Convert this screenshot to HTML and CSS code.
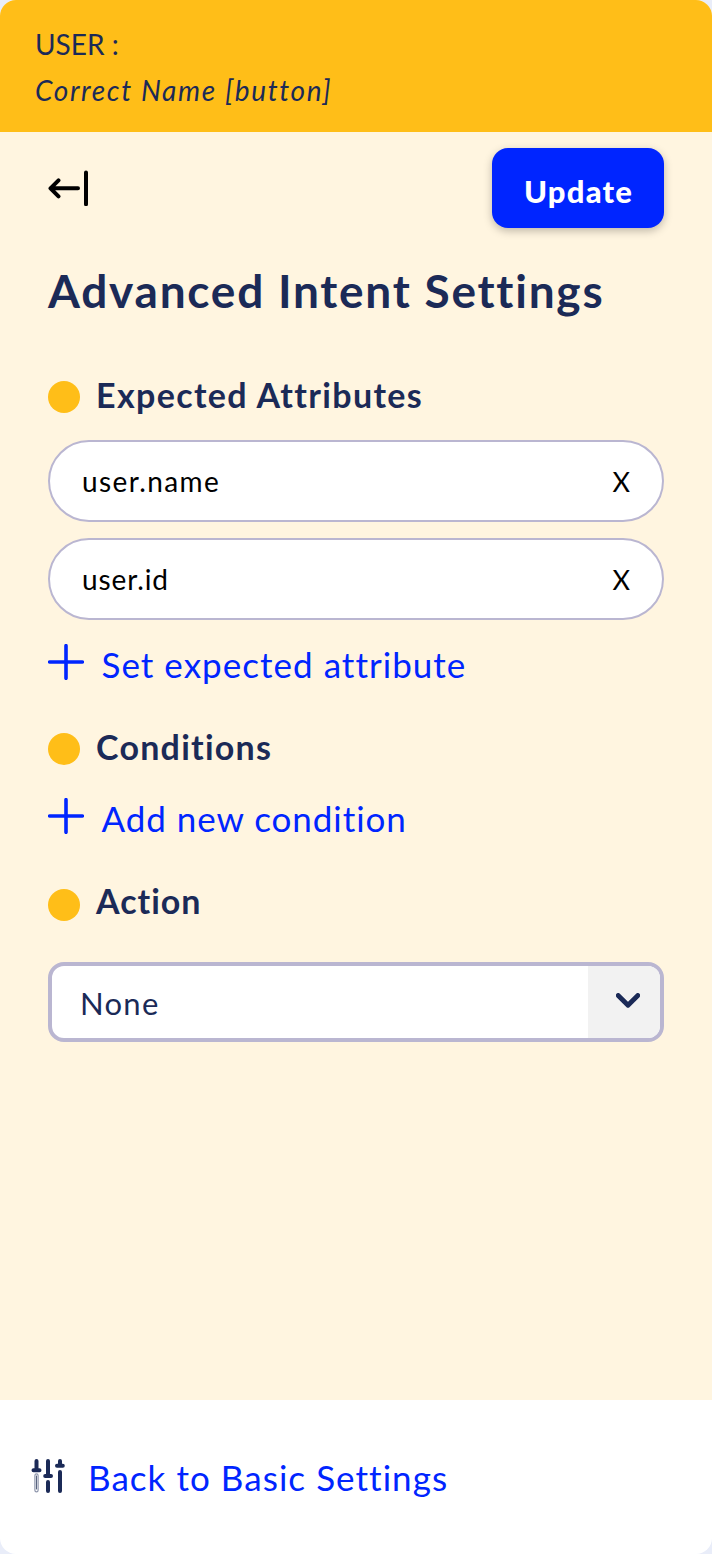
FILE: index.html
```html
<!DOCTYPE html>
<html lang="en">
<head>
<meta charset="utf-8">
<title>Advanced Intent Settings</title>
<link rel="stylesheet" href="styles.css">
</head>
<body>
<div class="panel">
  <header class="panel-header">
    <div><span class="t-user">USER :</span></div>
    <div><em class="t-name">Correct Name [button]</em></div>
  </header>
  <main class="content">
    <div class="toolbar">
      <svg class="back-icon" viewBox="0 0 42 36" fill="none" stroke="#000" stroke-width="4" stroke-linecap="round" stroke-linejoin="round"><path d="M30 18.300H2.500M10.500 10.300L2.500 18.300L10.500 26.300M38 2.500V34.300"/></svg>
      <button class="update"><span class="t-update">Update</span></button>
    </div>
    <h1><span class="t-title">Advanced Intent Settings</span></h1>
    <h2 class="section"><i class="dot"></i><span class="t-expected">Expected Attributes</span></h2>
    <div class="fields">
      <div class="field"><span class="t-username">user.name</span><span class="remove">X</span></div>
      <div class="field"><span class="t-userid">user.id</span><span class="remove">X</span></div>
    </div>
    <a class="add"><svg class="plus" viewBox="0 0 36 36"><path d="M18 1.7V34.3M1.7 18H34.3"/></svg><span class="t-set">Set expected attribute</span></a>
    <h2 class="section conditions"><i class="dot"></i><span class="t-conditions">Conditions</span></h2>
    <a class="add add-condition"><svg class="plus" viewBox="0 0 36 36"><path d="M18 1.7V34.3M1.7 18H34.3"/></svg><span class="t-add">Add new condition</span></a>
    <h2 class="section action"><i class="dot"></i><span class="t-action">Action</span></h2>
    <div class="select">
      <span class="t-none">None</span>
      <div class="arrow"><svg viewBox="0 0 24 15"><path d="M2.2 2.5L12 12.3L21.8 2.5"/></svg></div>
    </div>
  </main>
  <footer class="panel-footer">
    <svg class="sliders" viewBox="0 0 34 34" fill="none" stroke="#1b2a57" stroke-width="4" stroke-linecap="round"><path d="M5.500 2V10M2.500 11.200H8.500M17 2V15M14.200 17H20M17 23V32M29 2V5M26 6.800H31.800M29 13V32"/><rect x="3.900" y="14.800" width="3.200" height="18" rx="1.600" stroke="#8d95ab" stroke-width="1.200"/><path d="M5.500 17V30" stroke="#59647f" stroke-width="1"/></svg>
    <a class="t-back">Back to Basic Settings</a>
  </footer>
</div>
</body>
</html>
```
FILE: styles.css
```css
* { box-sizing: border-box; }
body { margin: 0; background: #e9edf9; font-family: Lato, sans-serif; font-variant-ligatures: none; color: #1b2a57; }
span, em, a { white-space: nowrap; }
svg { display: block; flex: none; }
.panel { height: 1554px; border-radius: 16px; overflow: hidden; background: #fff; display: flex; flex-direction: column; }
.panel-header { height: 132px; padding: 21px 35px 19px; background: #ffbe18; font-size: 28px; line-height: 46px; }
.content { flex: 1; padding: 16px 48px; background: #fff5e0; }
.toolbar { height: 80px; display: flex; justify-content: space-between; align-items: center; }
.back-icon { width: 42px; height: 36px; }
.update { width: 172px; height: 80px; padding: 5px 0 0; border: 0; border-radius: 16px; background: #0025ff; color: #fff; font: 900 31px Lato, sans-serif; box-shadow: 0 3px 8px rgba(0,0,0,.25); }
h1 { margin: 35px 0 0; font-size: 46px; line-height: 56px; font-weight: 700; }
.section { display: flex; align-items: center; gap: 16px; height: 40px; margin: 56px 0 0; font-size: 34px; line-height: 40px; font-weight: 700; }
.conditions { margin-top: 41px; }
.action { margin-top: 41px; }
.dot { width: 32px; height: 32px; flex: none; border-radius: 50%; background: #ffbe18; margin-top: 4px; }
.action .dot { margin-top: 8px; }
.fields { display: grid; gap: 16px; margin-top: 25px; }
.field { height: 82px; display: flex; align-items: center; justify-content: space-between; padding: 0 32px; border: 2px solid #bab6d1; border-radius: 41px; background: #fff; color: #000; font-size: 28px; }
.add { display: flex; align-items: center; gap: 17.5px; height: 44px; margin-top: 22px; color: #0025ff; font-size: 35px; line-height: 44px; }
.add-condition { margin-top: 29px; }
.plus { width: 36px; height: 36px; margin-bottom: 4px; stroke: currentColor; stroke-width: 3.6; stroke-linecap: round; }
.select { height: 80px; margin-top: 41px; display: flex; justify-content: space-between; border: 4px solid #bab6d1; border-radius: 16px; background: #fff; overflow: hidden; font-size: 31px; line-height: 74px; padding-left: 28px; }
.arrow { width: 72px; background: #f2f2f2; padding: 27px 0 0 28px; }
.arrow svg { width: 24px; height: 15px; fill: none; stroke: #1b2a57; stroke-width: 4.8; stroke-linecap: round; stroke-linejoin: round; }
.panel-footer { height: 154px; display: flex; align-items: center; gap: 23px; padding: 0 31px; color: #0025ff; font-size: 35px; }
.sliders { width: 34px; height: 34px; margin-bottom: 2px; }
.t-name { letter-spacing: 1.65px; }
.t-update { letter-spacing: 1.2px; margin-right: -1.2px; }
.t-title { letter-spacing: 1.75px; }
.t-expected { letter-spacing: 1.35px; }
.t-username { letter-spacing: 1.4px; }
.t-userid { letter-spacing: .9px; }
.remove { font-size: 27px; }
.t-set { letter-spacing: 1.03px; }
.t-conditions { letter-spacing: 1.25px; }
.t-add { letter-spacing: .95px; }
.t-action { letter-spacing: 1px; }
.t-none { letter-spacing: 1.3px; }
.t-back { letter-spacing: 1.05px; }
```
